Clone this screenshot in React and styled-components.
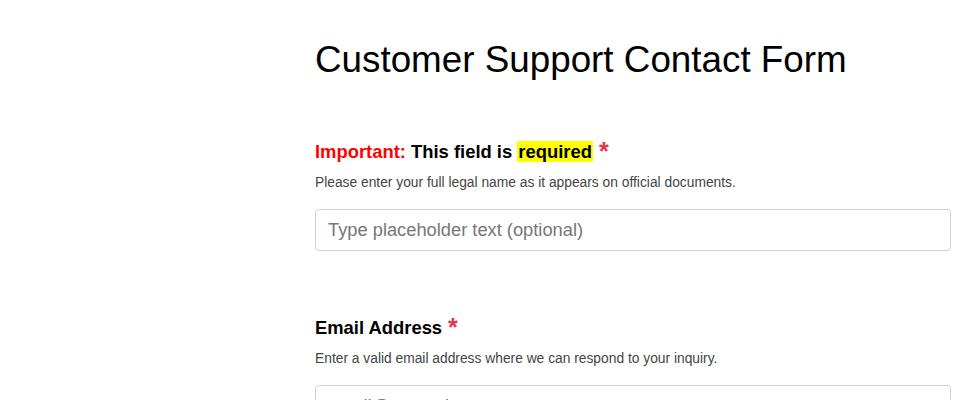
import React from "react";
import styled, { createGlobalStyle } from "styled-components";

const Global = createGlobalStyle`
  html, body { margin: 0; padding: 0; background: #fff; }
  body { font-family: "Liberation Sans", Arial, sans-serif; }
`;

const Page = styled.div`
  padding: 36px 9px 0 315px;
  display: flex;
  flex-direction: column;
`;

const Title = styled.h1`
  margin: 0 0 54px 0;
  font-size: 36.8px;
  font-weight: 400;
  color: #000;
  line-height: 48px;
`;

const Field = styled.div`
  display: flex;
  flex-direction: column;
  margin-bottom: 63px;
`;

const Label = styled.label`
  font-size: 18.4px;
  font-weight: 700;
  color: #000;
  line-height: 22px;
  display: flex;
  align-items: baseline;
`;

const Important = styled.span`
  color: #ff0000;
`;

const Mark = styled.mark`
  background: #ffff00;
  color: #000;
  padding: 0 1px;
`;

const Star = styled.span`
  color: #e8334a;
  margin-left: 6px;
  font-size: 25px;
  line-height: 22px;
  position: relative;
  top: 2px;
`;

const Help = styled.p`
  margin: 12px 0 0 0;
  font-size: 13.8px;
  line-height: 16px;
  color: #444;
`;

const Input = styled.input`
  margin-top: 18px;
  box-sizing: border-box;
  width: 100%;
  height: 42px;
  border: 1px solid #cfd1d6;
  border-radius: 4px;
  padding: 0 12px;
  font-family: "Liberation Sans", Arial, sans-serif;
  font-size: 18.3px;
  color: #000;
  outline: none;
  &::placeholder { color: #777; }
`;

export default function App() {
  return (
    <>
      <Global />
      <Page>
        <Title>Customer Support Contact Form</Title>
        <Field>
          <Label>
            <span>
              <Important>Important:</Important> This field is <Mark>required</Mark>
            </span>
            <Star>*</Star>
          </Label>
          <Help>Please enter your full legal name as it appears on official documents.</Help>
          <Input placeholder="Type placeholder text (optional)" />
        </Field>
        <Field>
          <Label>
            <span>Email Address</span>
            <Star>*</Star>
          </Label>
          <Help>Enter a valid email address where we can respond to your inquiry.</Help>
          <Input type="email" placeholder="email@example.com" />
        </Field>
      </Page>
    </>
  );
}
